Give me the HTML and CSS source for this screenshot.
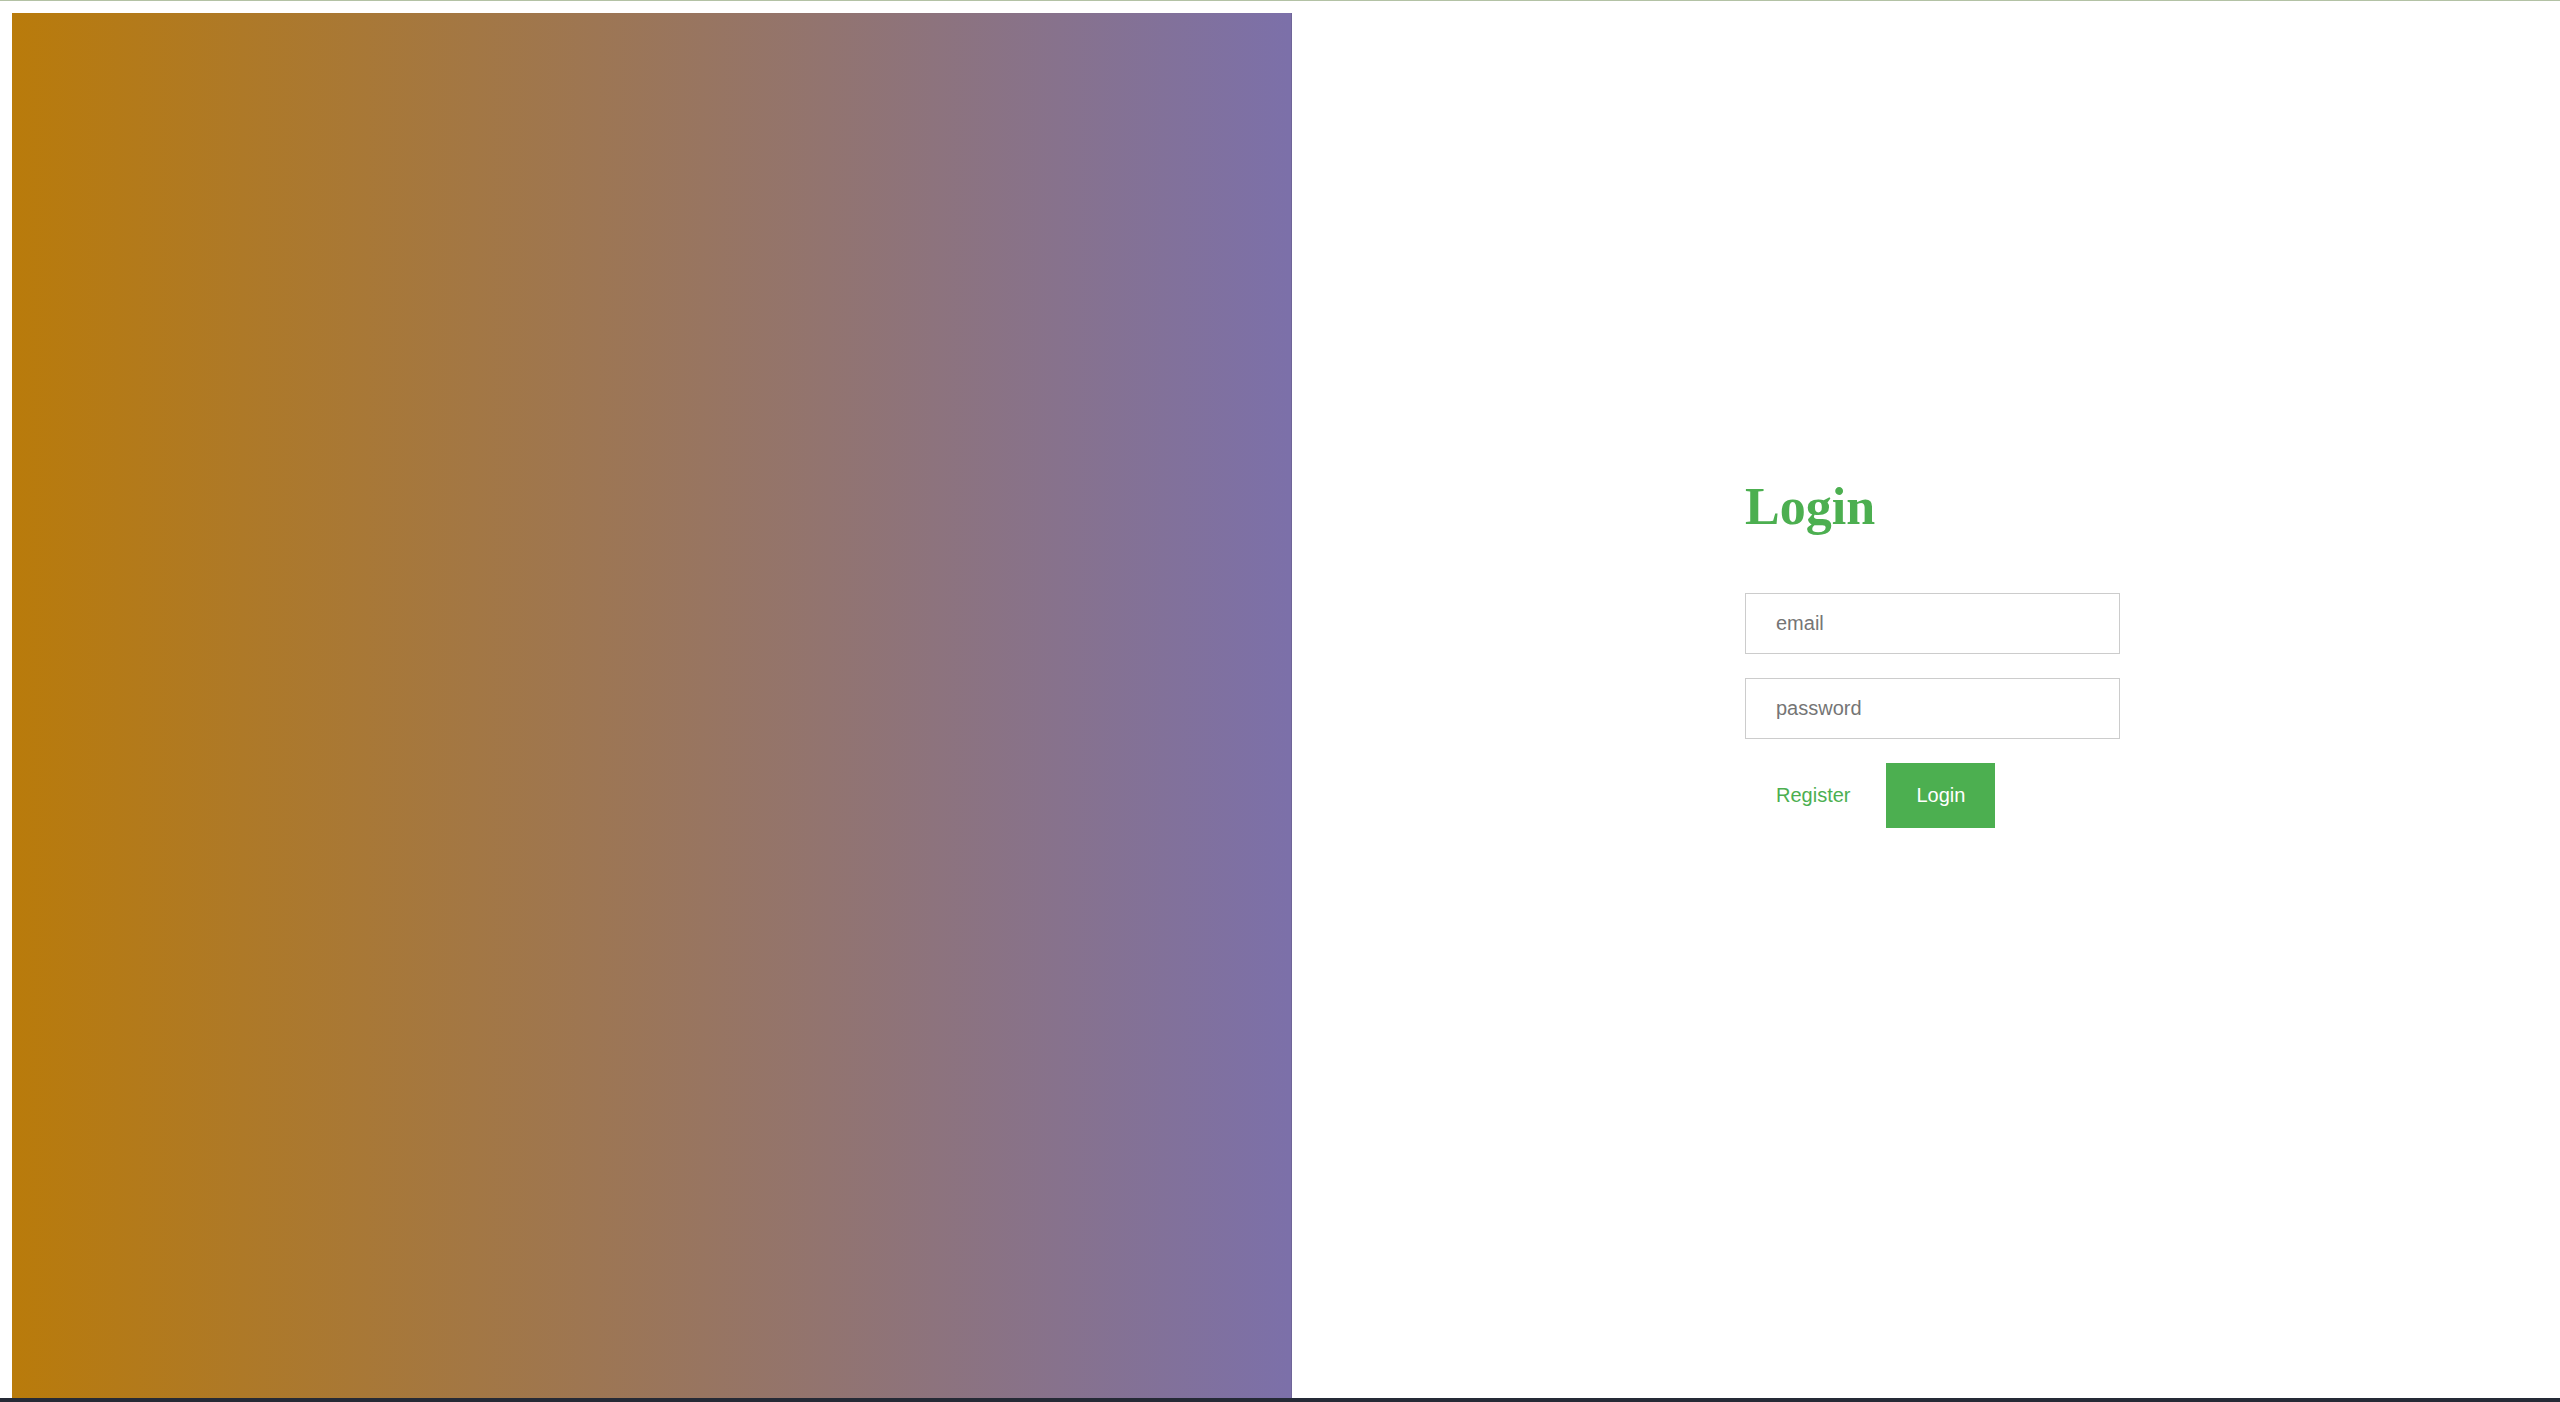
FILE: index.html
```html
<!DOCTYPE html>
<html lang="en">
<head>
<meta charset="utf-8">
<title>Login</title>
<link rel="stylesheet" href="styles.css">
</head>
<body>
<div class="top-line"></div>
<main class="page">
  <section class="hero"></section>
  <section class="side">
    <form class="login-form">
      <h1 class="title">Login</h1>
      <input class="field" type="email" placeholder="email">
      <input class="field" type="password" placeholder="password">
      <div class="actions">
        <button type="button" class="btn btn-link">Register</button>
        <button type="button" class="btn btn-primary">Login</button>
      </div>
    </form>
  </section>
</main>
<div class="bottom-bar"></div>
</body>
</html>
```

FILE: styles.css
```css
* { box-sizing: border-box; }
html, body {
  margin: 0;
  padding: 0;
  background: #ffffff;
  font-family: "Liberation Sans", Arial, sans-serif;
  overflow: hidden;
}
.top-line {
  height: 1px;
  background: #b3c2a5;
}
.page {
  display: flex;
  height: 1397px;
  padding: 12px 0 0 12px;
}
.hero {
  width: 1280px;
  height: 1385px;
  flex: none;
  background: linear-gradient(to right, #b97b0b 0%, #7c70a9 99.8%);
  border-right: 1px solid #6f6598;
}
.side {
  flex: 1;
  padding: 465px 0 0 453px;
}
.login-form {
  width: 375px;
  display: flex;
  flex-direction: column;
}
.title {
  margin: 0 0 57px 0;
  font-family: "Liberation Serif", "Times New Roman", serif;
  font-weight: bold;
  font-size: 52px;
  line-height: 58px;
  color: #4caf50;
}
.field {
  display: block;
  width: 375px;
  height: 61px;
  margin: 0 0 24px 0;
  padding: 0 30px;
  border: 1px solid #cccccc;
  font-family: "Liberation Sans", Arial, sans-serif;
  font-size: 20px;
  color: #333;
  outline: none;
  background: #fff;
}
.field::placeholder {
  color: #757575;
}
.actions {
  display: flex;
  align-items: center;
}
.btn {
  height: 65px;
  padding: 0 30px;
  border: none;
  font-family: "Liberation Sans", Arial, sans-serif;
  font-size: 20px;
  cursor: pointer;
}
.btn-link {
  background: transparent;
  color: #4caf50;
  margin-left: 1px;
  margin-right: 6px;
}
.btn-primary {
  background: #4caf50;
  color: #ffffff;
}
.bottom-bar {
  height: 4px;
  background: #252a36;
}
```
